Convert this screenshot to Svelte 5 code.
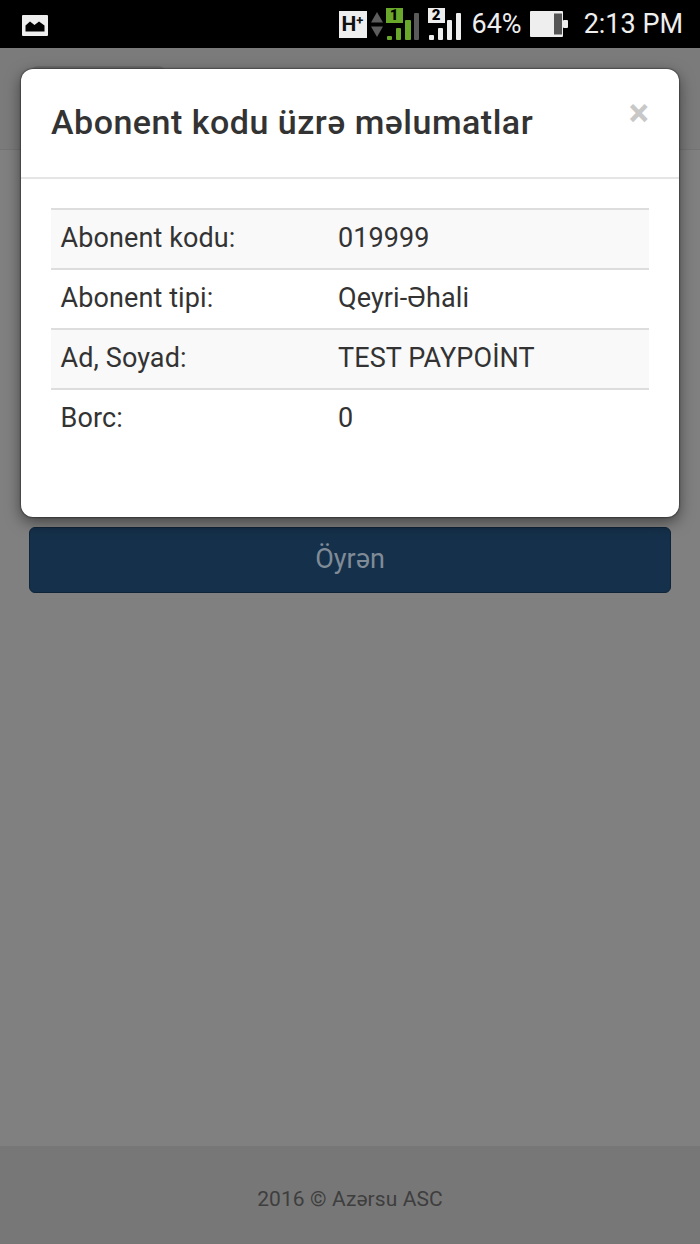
<script lang="ts">
  const rows = [
    ['Abonent kodu:', '019999'],
    ['Abonent tipi:', 'Qeyri-Əhali'],
    ['Ad, Soyad:', 'TEST PAYPOİNT'],
    ['Borc:', '0']
  ];
</script>

<div class="page">
  <header class="status">
    <svg class="pic" width="26" height="21" viewBox="0 0 26 21">
      <rect width="26" height="21" rx="1" fill="#eee" />
      <path d="M3.500 16.500V10.500L8 6.500L12.500 10L17 6.500L22.500 10.500V16.500Z" fill="#000" />
    </svg>
    <div class="right">
      <span class="net">H<sup>+</sup></span>
      <svg class="arrows" width="12" height="27" viewBox="0 0 12 27">
        <path d="M6 1L12 11.500H0Z" fill="#5d5d5d" />
        <path d="M6 26L12 15.500H0Z" fill="#5d5d5d" />
      </svg>
      <div class="sim">
        <span class="badge green">1</span>
        <svg width="33" height="32" viewBox="0 0 33 32">
          <rect x="1" y="28" width="5" height="4" rx="1" fill="#6aa82c" />
          <rect x="10" y="20" width="5" height="12" rx="1" fill="#6aa82c" />
          <rect x="19" y="12" width="6" height="20" rx="1" fill="#6aa82c" />
          <rect x="28" y="5" width="5" height="27" rx="1" fill="#5a5a5a" />
        </svg>
      </div>
      <div class="sim">
        <span class="badge white">2</span>
        <svg width="33" height="32" viewBox="0 0 33 32">
          <rect x="1" y="27" width="5" height="5" rx="1" fill="#eee" />
          <rect x="10" y="20" width="5" height="12" rx="1" fill="#eee" />
          <rect x="19" y="12" width="5" height="20" rx="1" fill="#eee" />
          <rect x="28" y="5" width="5" height="27" rx="1" fill="#eee" />
        </svg>
      </div>
      <span class="pct">64%</span>
      <svg class="battery" width="38" height="26" viewBox="0 0 38 26">
        <rect x="0" y="0" width="33" height="26" rx="1" fill="#eee" />
        <rect x="24" y="2.500" width="8" height="21" fill="#555" />
        <rect x="33" y="9" width="5" height="8" rx="1" fill="#eee" />
      </svg>
      <span class="time">2:13 PM</span>
    </div>
  </header>

  <nav class="navbar"><span class="tab"></span></nav>

  <main class="content">
    <button class="submit">Öyrən</button>
  </main>

  <footer class="foot">2016 © Azərsu ASC</footer>

  <section class="modal">
    <div class="modal-head">
      <h4>Abonent kodu üzrə məlumatlar</h4>
      <span class="close">×</span>
    </div>
    <div class="modal-body">
      <table>
        <tbody>
          {#each rows as [label, value], i (label)}
            <tr class:odd={i % 2 === 0}>
              <td class="key">{label}</td>
              <td>{value}</td>
            </tr>
          {/each}
        </tbody>
      </table>
    </div>
  </section>
</div>

<style>
  :global(body) {
    margin: 0;
    background: #808080;
  }
  .page {
    position: relative;
    display: flex;
    flex-direction: column;
    width: 700px;
    height: 1244px;
    overflow: hidden;
    background: #808080;
    font-family: Roboto, "Liberation Sans", sans-serif;
  }
  .status {
    display: flex;
    flex: none;
    align-items: center;
    justify-content: space-between;
    box-sizing: border-box;
    height: 48px;
    padding: 0 17px 0 22px;
    background: #000;
    color: #eee;
  }
  .pic {
    display: block;
    margin-top: 2px;
  }
  .right {
    display: flex;
    align-items: center;
  }
  .net {
    display: flex;
    align-items: flex-start;
    justify-content: center;
    box-sizing: border-box;
    width: 28px;
    height: 27px;
    background: #eee;
    color: #111;
    font-size: 21px;
    font-weight: 700;
    line-height: 27px;
  }
  .net sup {
    font-size: 13px;
    line-height: 20px;
  }
  .arrows {
    display: block;
    margin-left: 4px;
  }
  .sim {
    position: relative;
    width: 33px;
    height: 32px;
    margin-left: 3px;
  }
  .sim + .sim {
    margin-left: 9px;
  }
  .sim svg {
    display: block;
  }
  .badge {
    position: absolute;
    top: 0;
    left: 0;
    width: 17px;
    height: 15px;
    font-size: 15px;
    font-weight: 900;
    line-height: 15px;
    text-align: center;
  }
  .green {
    background: #6aa82c;
    color: #000;
  }
  .white {
    background: #eee;
    color: #000;
  }
  .pct {
    margin-left: 11px;
    font-size: 27px;
  }
  .battery {
    display: block;
    margin-left: 8px;
  }
  .time {
    margin-left: 16px;
    font-size: 27px;
  }
  .navbar {
    position: relative;
    flex: none;
    box-sizing: border-box;
    height: 102px;
    background: #7b7b7b;
    border-bottom: 1px solid #747474;
  }
  .tab {
    position: absolute;
    top: 18px;
    left: 30px;
    width: 136px;
    height: 20px;
    border-radius: 8px 8px 0 0;
    background: #6c6c6c;
  }
  .content {
    flex: 1;
    padding: 377px 29px 0;
  }
  .submit {
    display: block;
    width: 100%;
    height: 66px;
    padding: 0 0 2px;
    border: 1px solid #0f2438;
    border-radius: 6px;
    background: #15304a;
    color: #7f8b97;
    font: 27px Roboto, "Liberation Sans", sans-serif;
  }
  .foot {
    flex: none;
    box-sizing: border-box;
    height: 98px;
    padding-top: 41px;
    background: #777;
    color: #3e3e3e;
    font-size: 21px;
    letter-spacing: 0.1px;
    line-height: 25px;
    text-align: center;
  }
  .modal {
    position: absolute;
    top: 69px;
    left: 21px;
    box-sizing: border-box;
    width: 658px;
    height: 448px;
    border-radius: 12px;
    background: #fff;
    box-shadow: 0 0 2px #000, 0 5px 15px rgba(0, 0, 0, 0.5);
  }
  .modal-head {
    position: relative;
    box-sizing: border-box;
    height: 110px;
    padding: 30px 30px 0;
    border-bottom: 2px solid #e5e5e5;
  }
  h4 {
    margin: 0;
    color: #333;
    font-size: 34px;
    font-weight: 500;
    letter-spacing: 0.5px;
    line-height: 46px;
  }
  .close {
    position: absolute;
    top: 22px;
    right: 30px;
    color: #c8c8c8;
    font-size: 38px;
    font-weight: 700;
    line-height: 44px;
  }
  .modal-body {
    padding: 29px 30px 0;
  }
  table {
    width: 598px;
    border-collapse: collapse;
    table-layout: fixed;
    color: #333;
    font-size: 27px;
    letter-spacing: 0.1px;
  }
  tr {
    height: 60px;
    border-top: 2px solid #ddd;
  }
  tr.odd {
    background: #f9f9f9;
  }
  td {
    padding: 0 10px 3px 9.500px;
  }
  .key {
    width: 258px;
  }
</style>
